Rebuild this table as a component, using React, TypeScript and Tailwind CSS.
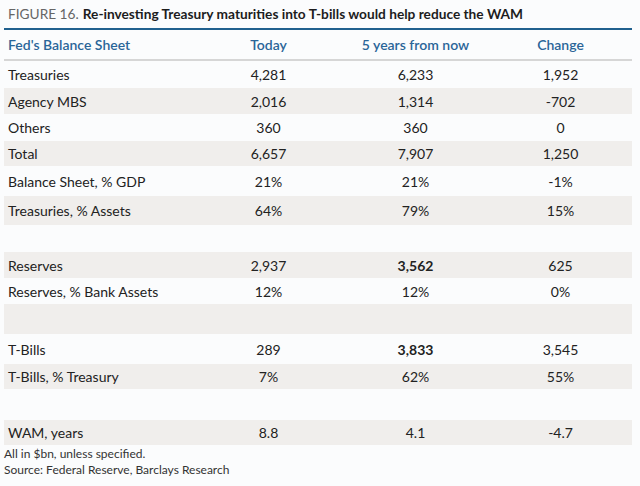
import clsx from 'clsx';

type Row = { label?: string; today?: string; future?: string; change?: string; bold?: boolean; h: string };

const rows: Row[] = [
  { label: 'Treasuries', today: '4,281', future: '6,233', change: '1,952', h: 'h-[27px]' },
  { label: 'Agency MBS', today: '2,016', future: '1,314', change: '-702', h: 'h-[26px]' },
  { label: 'Others', today: '360', future: '360', change: '0', h: 'h-[27px]' },
  { label: 'Total', today: '6,657', future: '7,907', change: '1,250', h: 'h-[25px]' },
  { label: 'Balance Sheet, % GDP', today: '21%', future: '21%', change: '-1%', h: 'h-[30px]' },
  { label: 'Treasuries, % Assets', today: '64%', future: '79%', change: '15%', h: 'h-[29px]' },
  { h: 'h-[27px]' },
  { label: 'Reserves', today: '2,937', future: '3,562', change: '625', bold: true, h: 'h-[26px]' },
  { label: 'Reserves, % Bank Assets', today: '12%', future: '12%', change: '0%', h: 'h-[26px]' },
  { h: 'h-[30px]' },
  { label: 'T-Bills', today: '289', future: '3,833', change: '3,545', bold: true, h: 'h-[30px]' },
  { label: 'T-Bills, % Treasury', today: '7%', future: '62%', change: '55%', h: 'h-[25px]' },
  { h: 'h-[31px]' },
  { label: 'WAM, years', today: '8.8', future: '4.1', change: '-4.7', h: 'h-[25px]' },
];

export default function App() {
  return (
    <div className="w-[640px] h-[486px] bg-[#fbfcfd] text-[#222] font-['Lato',sans-serif] text-[14px] overflow-hidden">
      <div className="h-[28px] flex items-center pl-[8px] text-[13.7px] whitespace-nowrap">
        <span className="text-[#666]">FIGURE 16.</span>
        <span className="ml-[4px] font-bold text-[#1d1d1d]">
          Re-investing Treasury maturities into T-bills would help reduce the WAM
        </span>
      </div>
      <div className="mx-[4px] w-[628px] border-t-2 border-[#20608e]">
        <div className="grid grid-cols-[191px_147px_147px_143px] h-[31px] items-center border-b-2 border-[#d6d6d6] text-[#2a6598] font-semibold">
          <div className="pl-[4px]">Fed's Balance Sheet</div>
          <div className="text-center">Today</div>
          <div className="text-center">5 years from now</div>
          <div className="text-center">Change</div>
        </div>
        {rows.map((r, i) => (
          <div
            key={i}
            className={clsx(
              'grid grid-cols-[191px_147px_147px_143px] items-center',
              r.h,
              i % 2 === 1 && 'bg-[#f0eeec]'
            )}
          >
            <div className="pl-[4px]">{r.label}</div>
            <div className="text-center">{r.today}</div>
            <div className={clsx('text-center', r.bold && 'font-bold')}>{r.future}</div>
            <div className="text-center">{r.change}</div>
          </div>
        ))}
      </div>
      <div className="pl-[4px] pt-[1px] text-[12px] leading-[16px] text-[#333]">
        <div>All in $bn, unless specified.</div>
        <div>Source: Federal Reserve, Barclays Research</div>
      </div>
    </div>
  );
}
